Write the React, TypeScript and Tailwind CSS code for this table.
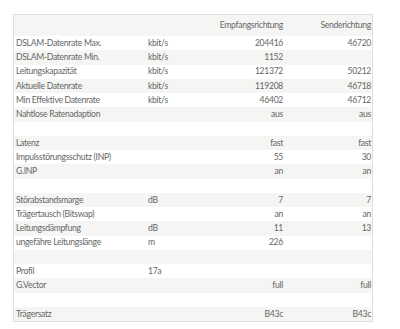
const ROWS: [string, string, string, string][] = [
  ["DSLAM-Datenrate Max.", "kbit/s", "204416", "46720"],
  ["DSLAM-Datenrate Min.", "kbit/s", "1152", ""],
  ["Leitungskapazität", "kbit/s", "121372", "50212"],
  ["Aktuelle Datenrate", "kbit/s", "119208", "46718"],
  ["Min Effektive Datenrate", "kbit/s", "46402", "46712"],
  ["Nahtlose Ratenadaption", "", "aus", "aus"],
  ["", "", "", ""],
  ["Latenz", "", "fast", "fast"],
  ["Impulsstörungsschutz (INP)", "", "55", "30"],
  ["G.INP", "", "an", "an"],
  ["", "", "", ""],
  ["Störabstandsmarge", "dB", "7", "7"],
  ["Trägertausch (Bitswap)", "", "an", "an"],
  ["Leitungsdämpfung", "dB", "11", "13"],
  ["ungefähre Leitungslänge", "m", "226", ""],
  ["", "", "", ""],
  ["Profil", "17a", "", ""],
  ["G.Vector", "", "full", "full"],
  ["", "", "", ""],
  ["Trägersatz", "", "B43c", "B43c"],
];

const GRID = "grid grid-cols-[134px_60px_76px_88px]";

export default function App() {
  return (
    <div className="h-[329px] w-[400px] bg-white pl-[13px] pt-[14px] font-['Lato','Liberation_Sans',sans-serif] text-[8.6px] tracking-[-0.3px] text-[#666666]">
      <div className="w-[360px] border border-[#dedede]">
        <div className={`${GRID} h-[21px] items-center bg-[#f5f5f4]`}>
          <span />
          <span />
          <span className="pr-[1px] text-right">Empfangsrichtung</span>
          <span className="pr-[1px] text-right">Senderichtung</span>
        </div>
        {ROWS.map((row, i) => (
          <div
            key={i}
            className={`${GRID} h-[14.25px] items-center leading-none ${i % 2 === 1 ? "bg-[#f5f5f4]" : "bg-white"}`}
          >
            <span className="pl-[2px]">{row[0]}</span>
            <span>{row[1]}</span>
            <span className="pr-[1px] text-right">{row[2]}</span>
            <span className="pr-[1px] text-right">{row[3]}</span>
          </div>
        ))}
      </div>
    </div>
  );
}
